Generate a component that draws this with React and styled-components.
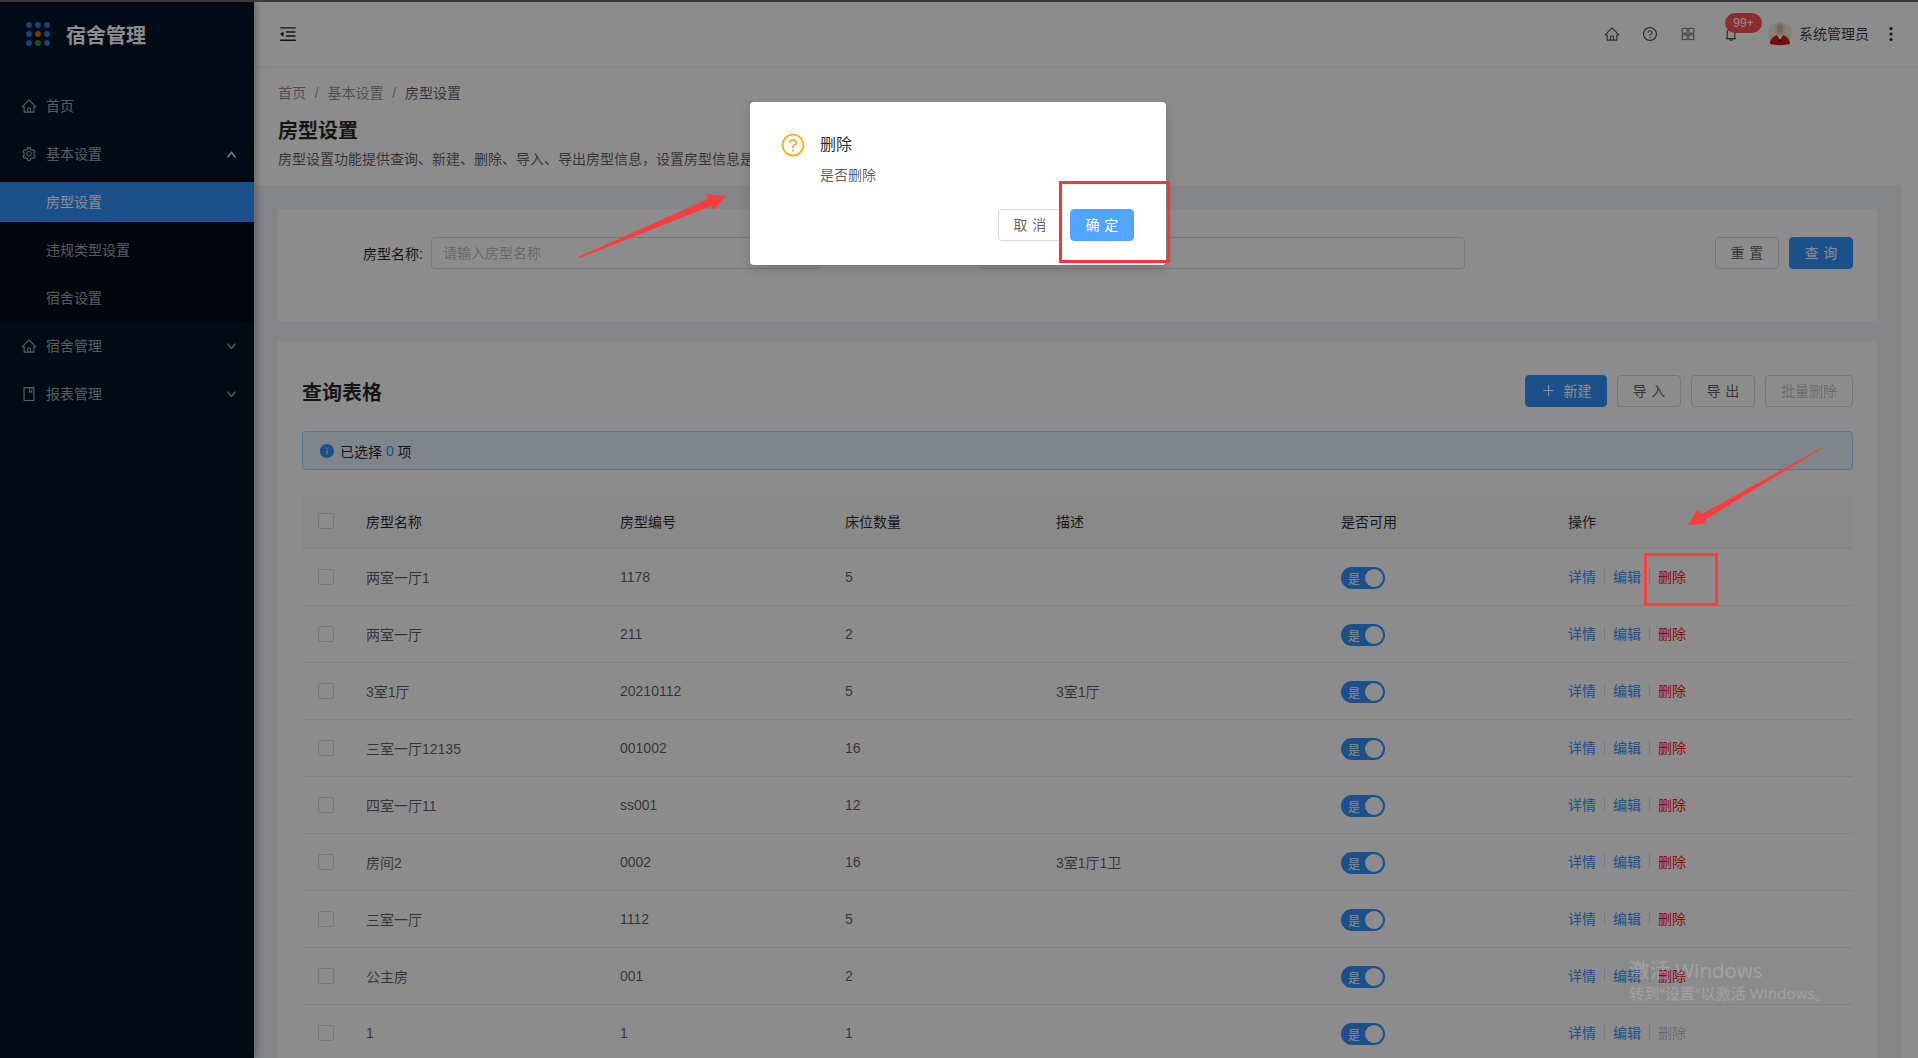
import React from 'react';
import styled, { createGlobalStyle } from 'styled-components';
import {
  AiOutlineHome, AiOutlineSetting, AiOutlineUp, AiOutlineDown, AiOutlineBook,
  AiOutlineMenuFold, AiOutlineQuestionCircle, AiOutlineBell,
  AiOutlinePlus, AiFillInfoCircle,
} from 'react-icons/ai';

const PRIMARY = '#3493fd';
const FONT = '"Liberation Sans", "Noto Sans CJK SC", sans-serif';

const Global = createGlobalStyle`
  html, body { margin: 0; padding: 0; height: 100%; overflow: hidden; background: #fff; }
  body { font-family: ${FONT}; font-size: 14px; color: rgba(0,0,0,.65); }
  * { box-sizing: border-box; }
`;

const Page = styled.div`
  position: relative;
  width: 1918px;
  height: 1058px;
  overflow: hidden;
  display: flex;
  flex-direction: column;
`;
const TopEdge = styled.div`
  height: 2px;
  flex: none;
  background: #3a3a3a;
  position: relative;
  z-index: 20;
`;
const Body = styled.div`
  flex: 1;
  display: flex;
  min-height: 0;
`;

/* sidebar */
const Sidebar = styled.aside`
  width: 254px;
  flex: none;
  background: #001529;
  box-shadow: 2px 0 8px rgba(0,0,0,.3);
  position: relative;
  z-index: 2;
`;
const Brand = styled.div`
  height: 80px;
  padding: 20px 0 0 26px;
  display: flex;
  align-items: flex-start;
  gap: 16px;
`;
const BrandName = styled.span`
  font-size: 20px;
  font-weight: 700;
  line-height: 28px;
  color: #fff;
`;
const Menu = styled.nav`
  display: flex;
  flex-direction: column;
`;
const MenuItem = styled.div`
  height: 40px;
  flex: none;
  margin: 4px 0;
  padding: 0 22px 0 21px;
  display: flex;
  align-items: center;
  font-size: 14px;
  color: ${p => (p.$active ? '#fff' : 'rgba(255,255,255,.65)')};
  background: ${p => (p.$active ? PRIMARY : 'transparent')};
`;
const MenuIcon = styled.span`
  display: flex;
  font-size: 16px;
`;
const MenuText = styled.span`
  margin-left: 9px;
  padding-bottom: 2px;
  flex: 1;
`;
const SubText = styled.span`
  margin-left: 25px;
  padding-bottom: 2px;
`;
const Chevron = styled.span`
  display: flex;
  margin-right: -5px;
  font-size: 11px;
  color: ${p => (p.$up ? 'rgba(255,255,255,.9)' : 'rgba(255,255,255,.5)')};
  svg { stroke: currentColor; stroke-width: 70; }
`;
const SubMenu = styled.div`
  background: #000c17;
  display: flex;
  flex-direction: column;
`;

/* main */
const Main = styled.main`
  flex: 1;
  min-width: 0;
  display: flex;
  flex-direction: column;
`;
const Header = styled.header`
  height: 64px;
  flex: none;
  background: #fff;
  box-shadow: 0 1px 4px rgba(0,21,41,.08);
  padding: 0 19px 0 24px;
  display: flex;
  align-items: center;
  position: relative;
  z-index: 1;
`;
const ToggleIcon = styled(AiOutlineMenuFold)`
  font-size: 20px;
  color: rgba(0,0,0,.85);
`;
const HeaderTools = styled.div`
  margin-left: auto;
  display: flex;
  align-items: center;
  color: rgba(0,0,0,.7);
`;
const ToolIcon = styled.span`
  display: flex;
  font-size: 16px;
  margin-left: ${p => p.$gap || 22}px;
  position: relative;
`;
const Badge = styled.span`
  position: absolute;
  left: 2px;
  top: -13px;
  width: 37px;
  height: 20px;
  border-radius: 10px;
  background: #ff5557;
  color: #fff;
  font-size: 12px;
  line-height: 20px;
  text-align: center;
`;
const AvatarWrap = styled.span`
  display: flex;
  margin-left: 28px;
`;
const UserName = styled.span`
  margin-left: 6px;
  padding-bottom: 2px;
  font-size: 14px;
  color: rgba(0,0,0,.8);
`;
const More = styled.span`
  display: flex;
  margin-left: 14px;
`;

const Scroller = styled.div`
  flex: 1;
  min-height: 0;
  display: flex;
`;
const ScrollTrack = styled.div`
  width: 17px;
  flex: none;
  background: #fff;
`;
const Content = styled.div`
  flex: 1;
  min-width: 0;
  overflow: hidden;
  background: #f0f2f5;
`;
const PageHead = styled.div`
  height: 119px;
  background: #fff;
  padding: 16px 24px 0;
`;
const Crumbs = styled.div`
  line-height: 22px;
  color: rgba(0,0,0,.45);
  display: flex;
  gap: 8.8px;
`;
const CrumbLast = styled.span`
  color: rgba(0,0,0,.65);
`;
const PageTitle = styled.h1`
  margin: 13px 0 0;
  font-size: 20px;
  line-height: 28px;
  font-weight: 700;
  color: rgba(0,0,0,.85);
`;
const PageDesc = styled.p`
  margin: 3px 0 0;
  line-height: 22px;
  color: rgba(0,0,0,.65);
`;
const Cards = styled.div`
  padding: 24px 24px 0;
`;
const Card = styled.section`
  background: #fff;
  padding: ${p => p.$pad};
  margin-bottom: 20px;
`;
const SearchRow = styled.form`
  display: flex;
  align-items: center;
  margin: 0;
`;
const FieldLabel = styled.label`
  width: ${p => p.$w}px;
  text-align: right;
  padding: 0 8px 1px 0;
  color: rgba(0,0,0,.85);
  flex: none;
`;
const TextInput = styled.input`
  width: ${p => p.$w}px;
  height: 32px;
  flex: none;
  border: 1px solid #d9d9d9;
  border-radius: 4px;
  padding: 0 11px;
  font: 14px ${FONT};
  background: #fff;
  outline: none;
  &::placeholder { color: #bfbfbf; }
`;
const ButtonRow = styled.div`
  margin-left: auto;
  display: flex;
  gap: 10px;
`;
const Button = styled.button`
  height: 32px;
  width: ${p => p.$w}px;
  padding: 0 0 2px;
  white-space: nowrap;
  border-radius: 4px;
  font: 14px ${FONT};
  border: 1px solid ${p => (p.$primary ? p.$color || PRIMARY : '#d9d9d9')};
  background: ${p => (p.$primary ? p.$color || PRIMARY : '#fff')};
  color: ${p => (p.$primary ? '#fff' : p.$disabled ? 'rgba(0,0,0,.25)' : 'rgba(0,0,0,.65)')};
  display: inline-flex;
  align-items: center;
  justify-content: center;
  gap: 8px;
  letter-spacing: ${p => (p.$spaced ? '.34em' : '0')};
  text-indent: ${p => (p.$spaced ? '.34em' : '0')};
  svg { font-size: 15px; }
`;
const TableBar = styled.div`
  height: 32px;
  display: flex;
  align-items: center;
  justify-content: space-between;
`;
const CardTitle = styled.h2`
  margin: 3px 0 0;
  font-size: 20px;
  line-height: 32px;
  font-weight: 700;
  color: rgba(0,0,0,.85);
`;
const Alert = styled.div`
  margin-top: 24px;
  height: 39px;
  border: 1px solid #a3d3ff;
  background: #e6f4ff;
  border-radius: 4px;
  padding: 0 16px;
  display: flex;
  align-items: center;
  color: rgba(0,0,0,.85);
  white-space: pre;
  svg { color: ${PRIMARY}; font-size: 16px; margin-right: 5px; }
`;
const AlertCount = styled.span`
  color: ${PRIMARY};
`;
const Table = styled.div`
  margin-top: 25px;
`;
const Row = styled.div`
  display: grid;
  grid-template-columns: 48px 254px 225px 211px 285px 227px 1fr;
  align-items: center;
  height: ${p => (p.$head ? 54 : 57)}px;
  border-bottom: 1px solid #ececec;
  background: ${p => (p.$head ? '#fafafa' : '#fff')};
  color: ${p => (p.$head ? 'rgba(0,0,0,.85)' : 'rgba(0,0,0,.65)')};
`;
const Cell = styled.div`
  padding-left: 16px;
`;
const CheckCell = styled.div`
  padding: 0 0 1px 16px;
`;
const HeadText = styled.div`
  padding: 0 0 2px 16px;
`;
const Check = styled.span`
  display: block;
  width: 16px;
  height: 16px;
  border: 1px solid #d9d9d9;
  border-radius: 2px;
  background: #fff;
`;
const Switch = styled.span`
  display: flex;
  align-items: center;
  width: 44px;
  height: 22px;
  margin-top: 2px;
  border-radius: 11px;
  background: ${PRIMARY};
  color: #fff;
  font-size: 12px;
  padding: 0 2px 0 7px;
  justify-content: space-between;
`;
const Knob = styled.span`
  width: 18px;
  height: 18px;
  border-radius: 50%;
  background: #fff;
`;
const Actions = styled.div`
  display: flex;
  align-items: center;
  gap: 8px;
  padding-bottom: 2px;
`;
const ActionLink = styled.a`
  color: ${p => (p.$danger ? '#ff1414' : p.$muted ? 'rgba(0,0,0,.25)' : PRIMARY)};
`;
const ActionSep = styled.span`
  width: 1px;
  height: 14px;
  background: #e0e0e0;
`;

/* modal layer */
const Mask = styled.div`
  position: absolute;
  inset: 0;
  background: rgba(0,0,0,.45);
  z-index: 10;
  display: flex;
  justify-content: center;
  align-items: flex-start;
  padding: 102px 2px 0 0;
`;
const Dialog = styled.div`
  width: 416px;
  height: 163px;
  background: #fff;
  border-radius: 4px;
  padding: 32px 32px 24px;
  box-shadow: 0 4px 12px rgba(0,0,0,.15);
`;
const DialogMain = styled.div`
  display: flex;
  gap: 16px;
`;
const QuestionIcon = styled(AiOutlineQuestionCircle)`
  font-size: 26px;
  color: #faad14;
  margin: -2px -2px 0 -2px;
  flex: none;
`;
const DialogTitle = styled.div`
  font-size: 16px;
  line-height: 22px;
  color: rgba(0,0,0,.85);
`;
const DialogText = styled.div`
  margin-top: 8px;
  line-height: 22px;
  color: rgba(0,0,0,.65);
`;
const DialogFoot = styled.div`
  margin-top: 23px;
  display: flex;
  justify-content: flex-end;
  gap: 8px;
`;

/* annotation layer */
const Mark = styled.svg`
  position: absolute;
  inset: 0;
  z-index: 12;
  pointer-events: none;
`;
const Watermark = styled.div`
  position: absolute;
  left: 1629px;
  top: 955px;
  z-index: 13;
  color: rgba(255,255,255,.2);
  font-family: "Open Sans", "Noto Sans CJK SC", sans-serif;
  pointer-events: none;
`;
const WmTitle = styled.div`
  font-size: 20.5px;
  line-height: 30px;
`;
const WmSub = styled.div`
  font-size: 15.2px;
  line-height: 17px;
`;

const rows = [
  ['两室一厅1', '1178', '5', ''],
  ['两室一厅', '211', '2', ''],
  ['3室1厅', '20210112', '5', '3室1厅'],
  ['三室一厅12135', '001002', '16', ''],
  ['四室一厅11', 'ss001', '12', ''],
  ['房间2', '0002', '16', '3室1厅1卫'],
  ['三室一厅', '1112', '5', ''],
  ['公主房', '001', '2', ''],
  ['1', '1', '1', '', true],
];

const Logo = () => {
  const c = ['#2b7fd6', '#2b7fd6', '#2b7fd6', '#2b7fd6', '#e86a00', '#2b7fd6', '#2b7fd6', '#2f9a2f', '#2b7fd6'];
  return (
    <svg width="24" height="24" viewBox="0 0 24 24">
      {c.map((f, i) => (
        <circle key={i} cx={3 + (i % 3) * 9} cy={3 + Math.floor(i / 3) * 9} r="2.9" fill={f} />
      ))}
    </svg>
  );
};

const GridIcon = () => (
  <svg width="16" height="16" viewBox="0 0 16 16" fill="none" stroke="currentColor" strokeOpacity=".75" strokeWidth="1.1">
    <rect x="2.2" y="2.4" width="5" height="4.8" />
    <rect x="8.8" y="2.4" width="5" height="4.8" />
    <rect x="2.2" y="8.8" width="5" height="4.8" />
    <rect x="8.8" y="8.8" width="5" height="4.8" />
  </svg>
);

const MoreIcon = () => (
  <svg width="16" height="16" viewBox="0 0 16 16" fill="rgba(0,0,0,.85)">
    <circle cx="8" cy="2.5" r="1.6" />
    <circle cx="8" cy="8" r="1.6" />
    <circle cx="8" cy="13.5" r="1.6" />
  </svg>
);

const Avatar = () => (
  <svg width="26" height="24" viewBox="0 0 26 24">
    <circle cx="13" cy="12" r="12" fill="#f2ecd8" />
    <ellipse cx="13" cy="7.5" rx="5.6" ry="6.4" fill="#f6d2c4" />
    <ellipse cx="13" cy="7" rx="3" ry="4.2" fill="#d8b8ae" />
    <path d="M3 22 C3 16 7 14.5 10 13 L13 18 L16 13 C19 14.5 23 16 23 22 C18 23.5 8 23.5 3 22Z" fill="#e01515" />
    <path d="M10.5 13 L13 18 L15.5 13 L13 13.8Z" fill="#fff" />
    <path d="M11 18 L13 17.2 L15 18 L13 19.4Z" fill="#2a1010" />
  </svg>
);

export default function App() {
  return (
    <Page>
      <Global />
      <TopEdge />
      <Body>
        <Sidebar>
          <Brand>
            <Logo />
            <BrandName>宿舍管理</BrandName>
          </Brand>
          <Menu>
            <MenuItem>
              <MenuIcon><AiOutlineHome /></MenuIcon>
              <MenuText>首页</MenuText>
            </MenuItem>
            <MenuItem>
              <MenuIcon><AiOutlineSetting /></MenuIcon>
              <MenuText>基本设置</MenuText>
              <Chevron $up><AiOutlineUp /></Chevron>
            </MenuItem>
            <SubMenu>
              <MenuItem $active><SubText>房型设置</SubText></MenuItem>
              <MenuItem><SubText>违规类型设置</SubText></MenuItem>
              <MenuItem><SubText>宿舍设置</SubText></MenuItem>
            </SubMenu>
            <MenuItem>
              <MenuIcon><AiOutlineHome /></MenuIcon>
              <MenuText>宿舍管理</MenuText>
              <Chevron><AiOutlineDown /></Chevron>
            </MenuItem>
            <MenuItem>
              <MenuIcon><AiOutlineBook /></MenuIcon>
              <MenuText>报表管理</MenuText>
              <Chevron><AiOutlineDown /></Chevron>
            </MenuItem>
          </Menu>
        </Sidebar>
        <Main>
          <Header>
            <ToggleIcon />
            <HeaderTools>
              <ToolIcon><AiOutlineHome /></ToolIcon>
              <ToolIcon><AiOutlineQuestionCircle /></ToolIcon>
              <ToolIcon><GridIcon /></ToolIcon>
              <ToolIcon $gap={27}>
                <AiOutlineBell />
                <Badge>99+</Badge>
              </ToolIcon>
              <AvatarWrap><Avatar /></AvatarWrap>
              <UserName>系统管理员</UserName>
              <More><MoreIcon /></More>
            </HeaderTools>
          </Header>
          <Scroller>
            <Content>
              <PageHead>
                <Crumbs>
                  <span>首页</span><span>/</span><span>基本设置</span><span>/</span>
                  <CrumbLast>房型设置</CrumbLast>
                </Crumbs>
                <PageTitle>房型设置</PageTitle>
                <PageDesc>房型设置功能提供查询、新建、删除、导入、导出房型信息，设置房型信息是否可用</PageDesc>
              </PageHead>
              <Cards>
                <Card $pad="28px 24px 52px 0">
                  <SearchRow>
                    <FieldLabel $w={153}>房型名称:</FieldLabel>
                    <TextInput $w={388} placeholder="请输入房型名称" />
                    <FieldLabel $w={162}>房型编号:</FieldLabel>
                    <TextInput $w={484} />
                    <ButtonRow>
                      <Button type="button" $w={64} $spaced>重置</Button>
                      <Button type="button" $w={64} $primary $spaced>查询</Button>
                    </ButtonRow>
                  </SearchRow>
                </Card>
                <Card $pad="34px 24px 0">
                  <TableBar>
                    <CardTitle>查询表格</CardTitle>
                    <ButtonRow>
                      <Button type="button" $w={82} $primary><AiOutlinePlus />新建</Button>
                      <Button type="button" $w={64} $spaced>导入</Button>
                      <Button type="button" $w={64} $spaced>导出</Button>
                      <Button type="button" $w={88} $disabled>批量删除</Button>
                    </ButtonRow>
                  </TableBar>
                  <Alert>
                    <AiFillInfoCircle />已选择 <AlertCount>0</AlertCount> 项
                  </Alert>
                  <Table>
                    <Row $head>
                      <CheckCell><Check /></CheckCell>
                      <HeadText>房型名称</HeadText>
                      <HeadText>房型编号</HeadText>
                      <HeadText>床位数量</HeadText>
                      <HeadText>描述</HeadText>
                      <HeadText>是否可用</HeadText>
                      <HeadText>操作</HeadText>
                    </Row>
                    {rows.map(([name, code, beds, desc, last]) => (
                      <Row key={name + code}>
                        <CheckCell><Check /></CheckCell>
                        <Cell>{name}</Cell>
                        <Cell>{code}</Cell>
                        <Cell>{beds}</Cell>
                        <Cell>{desc}</Cell>
                        <Cell><Switch>是<Knob /></Switch></Cell>
                        <Cell>
                          <Actions>
                            <ActionLink>详情</ActionLink>
                            <ActionSep />
                            <ActionLink>编辑</ActionLink>
                            <ActionSep />
                            <ActionLink $danger={!last} $muted={last}>删除</ActionLink>
                          </Actions>
                        </Cell>
                      </Row>
                    ))}
                  </Table>
                </Card>
              </Cards>
            </Content>
            <ScrollTrack />
          </Scroller>
        </Main>
      </Body>
      <Mask>
        <Dialog>
          <DialogMain>
            <QuestionIcon />
            <div>
              <DialogTitle>删除</DialogTitle>
              <DialogText>是否删除</DialogText>
            </div>
          </DialogMain>
          <DialogFoot>
            <Button type="button" $w={64} $spaced>取消</Button>
            <Button type="button" $w={64} $primary $color="#52a5ff" $spaced>确定</Button>
          </DialogFoot>
        </Dialog>
      </Mask>
      <Mark width="1918" height="1058" viewBox="0 0 1918 1058">
        <rect x="1060.5" y="182.5" width="108" height="79" fill="none" stroke="#f73535" strokeWidth="3" />
        <rect x="1645.5" y="554.5" width="71" height="50" fill="none" stroke="#f73f3f" strokeWidth="3" />
        <polygon points="578,257 707,199.5 706,194 726,196 713,210 711,206 580,258" fill="#fb3d3d" />
        <polygon points="1821,448 1702,514 1697,510 1688,525 1707,523 1705.5,519.5 1822,448.5" fill="#fb3d3d" />
      </Mark>
      <Watermark>
        <WmTitle>激活 Windows</WmTitle>
        <WmSub>转到“设置”以激活 Windows。</WmSub>
      </Watermark>
    </Page>
  );
}
